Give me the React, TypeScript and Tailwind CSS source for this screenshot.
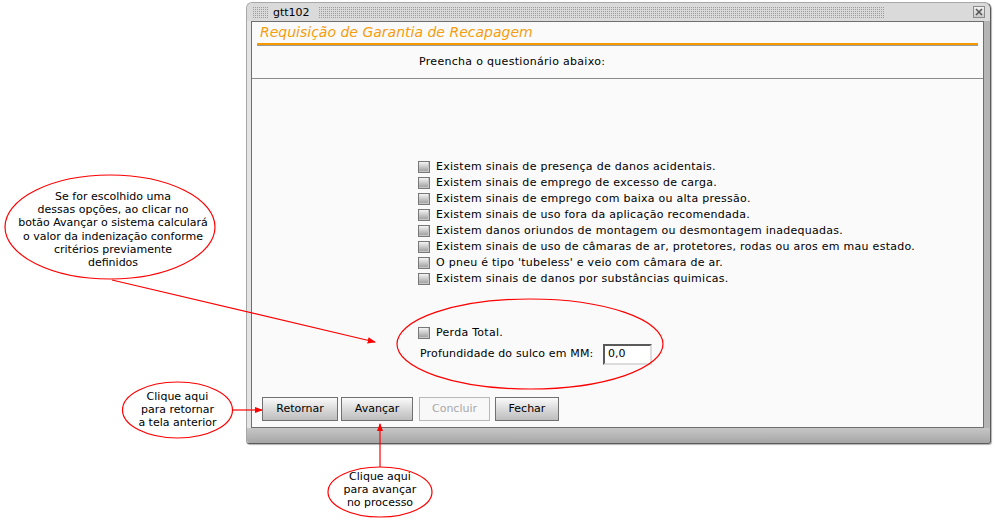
import React from "react"

const items = [
  "Existem sinais de presença de danos acidentais.",
  "Existem sinais de emprego de excesso de carga.",
  "Existem sinais de emprego com baixa ou alta pressão.",
  "Existem sinais de uso fora da aplicação recomendada.",
  "Existem danos oriundos de montagem ou desmontagem inadequadas.",
  "Existem sinais de uso de câmaras de ar, protetores, rodas ou aros em mau estado.",
  "O pneu é tipo 'tubeless' e veio com câmara de ar.",
  "Existem sinais de danos por substâncias quimicas.",
]

function CheckBox() {
  return (
    <span className="block h-[12px] w-[12px] shrink-0 border border-[#777] bg-[linear-gradient(#f4f4f4,#9a9a9a)] shadow-[inset_-1px_-1px_0_#c8c8c8]" />
  )
}

function Dots({ className }: { className: string }) {
  return <div className={"h-[11px] bg-[conic-gradient(#9c9c9c_25%,transparent_0)] bg-[length:2px_2px] " + className} />
}

export default function App() {
  return (
    <div className="relative h-[520px] w-[995px] overflow-hidden bg-white font-['DejaVu_Sans',Verdana,sans-serif] text-[11px] text-black">
      <div className="ml-[246px] mt-[2px] flex h-[442px] w-[745px] flex-col rounded-t-[6px] rounded-b-[3px] border border-[#a8a8a8] border-r-[#5a5a5a] border-b-[#5a5a5a] bg-[linear-gradient(90deg,#e4e4e4,#cfcfcf_50%,#b4b4b4)] shadow-[1px_1px_1px_rgba(0,0,0,0.3)]">
        {/* title bar */}
        <div className="flex h-[18px] items-center rounded-t-[6px] bg-[#dadada] pl-[5px] pr-[5px]">
          <Dots className="w-[16px]" />
          <span className="px-[5px] leading-none">gtt102</span>
          <Dots className="ml-[3px] w-[566px]" />
          <div className="flex-1" />
          <div className="flex h-[12px] w-[12px] items-center justify-center border border-[#8a8a8a] bg-[linear-gradient(#f2f2f2,#c8c8c8)]">
            <svg width="8" height="8" viewBox="0 0 8 8">
              <path d="M1 1L7 7M7 1L1 7" stroke="#555" strokeWidth="1.6" />
            </svg>
          </div>
        </div>

        {/* panel */}
        <div className="ml-[4px] flex h-[407px] w-[733px] flex-col border border-[#6e6e6e] bg-[#fafafa]">
          <div className="flex h-[21px] items-center pl-[8px] text-[14px] italic text-[#f59d0e]">
            Requisição de Garantia de Recapagem
          </div>
          <div className="mx-[5px] h-[2px] bg-[#f79a00]" />
          <div className="mx-[5px] h-[1px] bg-[#9a9a9a]" />
          <div className="flex h-[32px] items-center pl-[167px] tracking-[0.3px]">Preencha o questionário abaixo:</div>
          <div className="h-[1px] bg-[#8a8a8a]" />

          <div className="mt-[80px] flex flex-col pl-[166px] tracking-[0.27px]">
            {items.map((t) => (
              <div key={t} className="flex h-[16px] items-center gap-[6px]">
                <CheckBox />
                <span>{t}</span>
              </div>
            ))}
          </div>

          <div className="mt-[38px] flex h-[16px] items-center gap-[6px] pl-[166px] tracking-[0.27px]">
            <CheckBox />
            <span>Perda Total.</span>
          </div>
          <div className="mt-[3px] flex items-center pl-[168px]">
            <span className="w-[183px] tracking-[0.15px]">Profundidade do sulco em MM:</span>
            <div className="flex h-[21px] w-[49px] items-center border-2 border-[#5a5a5a] border-r-[#dcdcdc] border-b-[#dcdcdc] bg-white pl-[3px]">
              0,0
            </div>
          </div>

          <div className="mt-[32px] flex pl-[10px]">
            <button className="h-[24px] w-[76px] border border-[#707070] bg-[linear-gradient(#fafafa,#d4d4d4_60%,#bdbdbd)] text-[11px]">Retornar</button>
            <button className="ml-[3px] h-[24px] w-[72px] border border-[#707070] bg-[linear-gradient(#fafafa,#d4d4d4_60%,#bdbdbd)] text-[11px]">Avançar</button>
            <button className="ml-[6px] h-[24px] w-[71px] border border-[#b8b8b8] bg-[#f8f8f8] text-[11px] text-[#a8a8a8]">Concluir</button>
            <button className="ml-[5px] h-[24px] w-[64px] border border-[#707070] bg-[linear-gradient(#fafafa,#d4d4d4_60%,#bdbdbd)] text-[11px]">Fechar</button>
          </div>
        </div>
        <div className="flex-1 rounded-b-[3px] bg-[linear-gradient(#c6c6c6,#a6a6a6)]" />
      </div>

      {/* annotations */}
      <svg className="pointer-events-none absolute left-0 top-0" width="995" height="520">
        <defs>
          <marker id="ah" viewBox="0 0 8 8" refX="7" refY="4" markerWidth="7" markerHeight="7" orient="auto">
            <path d="M0 1L8 4L0 7Z" fill="#f00" />
          </marker>
        </defs>
        <g fill="none" stroke="#f00" strokeWidth="1.2">
          <ellipse cx="110" cy="227" rx="105" ry="52" />
          <ellipse cx="530" cy="344" rx="133" ry="45" />
          <ellipse cx="177.5" cy="410" rx="55" ry="28" />
          <ellipse cx="380" cy="492" rx="52" ry="25" />
          <line x1="112" y1="280" x2="375" y2="342" markerEnd="url(#ah)" />
          <line x1="233" y1="410" x2="262" y2="410" markerEnd="url(#ah)" />
          <line x1="380" y1="467" x2="380" y2="424" markerEnd="url(#ah)" />
        </g>
      </svg>

      <div className="absolute left-[8px] top-[190px] w-[210px] text-center leading-[13.2px]">
        Se for escolhido uma
        <br />
        dessas opções, ao clicar no
        <br />
        botão Avançar o sistema calculará
        <br />
        o valor da indenização conforme
        <br />
        critérios previamente
        <br />
        definidos
      </div>
      <div className="absolute left-[125px] top-[390px] w-[105px] text-center leading-[13px]">
        Clique aqui
        <br />
        para retornar
        <br />a tela anterior
      </div>
      <div className="absolute left-[328px] top-[470px] w-[104px] text-center leading-[13px]">
        Clique aqui
        <br />
        para avançar
        <br />
        no processo
      </div>
    </div>
  )
}
